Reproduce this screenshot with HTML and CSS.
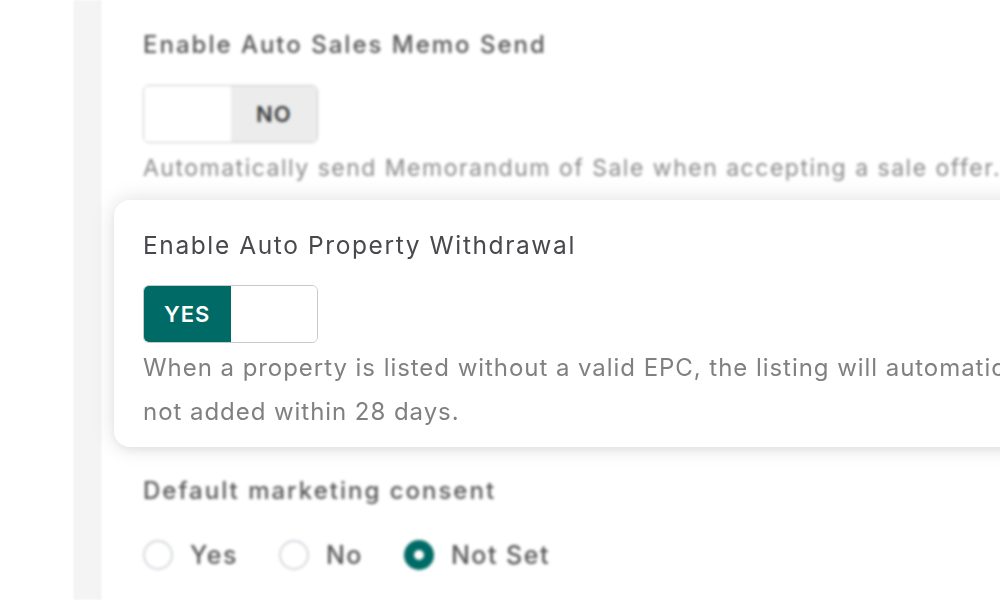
FILE: index.html
```html
<!DOCTYPE html>
<html>
<head>
<meta charset="utf-8">
<link rel="stylesheet" href="styles.css">
</head>
<body>
<div class="page">
  <div class="gutter"></div>
  <div class="rail"></div>
  <main class="content">
    <section class="field blurred first">
      <div class="label">Enable Auto Sales Memo Send</div>
      <div class="toggle">
        <span class="seg"></span>
        <span class="seg off">NO</span>
      </div>
      <div class="desc">Automatically send Memorandum of Sale when accepting a sale offer.</div>
    </section>

    <section class="card">
      <div class="label strong">Enable Auto Property Withdrawal</div>
      <div class="toggle">
        <span class="seg on">YES</span>
        <span class="seg"></span>
      </div>
      <div class="desc">When a property is listed without a valid EPC, the listing will automatically be withdrawn if one is<br>not added within 28 days.</div>
    </section>

    <section class="field blurred third">
      <div class="label">Default marketing consent</div>
      <div class="radios">
        <label class="radio"><span class="dot"></span>Yes</label>
        <label class="radio"><span class="dot"></span>No</label>
        <label class="radio"><span class="dot checked"></span>Not Set</label>
      </div>
    </section>
  </main>
</div>
</body>
</html>
```

FILE: styles.css
```css
html, body {
  margin: 0;
  padding: 0;
  background: #ffffff;
  overflow: hidden;
}
body {
  font-family: Inter, "Liberation Sans", sans-serif;
  width: 1000px;
  height: 600px;
}
.page {
  display: flex;
  height: 600px;
}
.gutter {
  width: 74px;
  flex: none;
  background: #ffffff;
}
.rail {
  width: 25px;
  flex: none;
  background: #f4f4f5;
  border-left: 1px solid #ececee;
  border-right: 1px solid #ececee;
  filter: blur(1px);
}
.content {
  flex: 1;
  padding-left: 42px;
  display: flex;
  flex-direction: column;
  min-width: 0;
}
.field {
  white-space: nowrap;
}
.blurred {
  filter: blur(1.4px);
}
.first {
  padding-top: 29px;
}
.label {
  font-size: 24.5px;
  line-height: 32px;
  color: #48484d;
  letter-spacing: 1.6px;
  white-space: nowrap;
}
.blurred .label {
  font-size: 24px;
  font-weight: 500;
  color: #555558;
  letter-spacing: 2px;
}
.toggle {
  margin-top: 24px;
  width: 173px;
  height: 56px;
  border: 1px solid #c9c9c9;
  border-radius: 6px;
  display: flex;
  overflow: hidden;
  box-sizing: content-box;
}
.seg {
  flex: 1;
  display: flex;
  align-items: center;
  justify-content: center;
  font-size: 22px;
  font-weight: 600;
  background: #ffffff;
  letter-spacing: 1px;
}
.seg.on {
  background: #006b66;
  color: #ffffff;
}
.seg.off {
  background: #ececec;
  color: #3a3a3a;
}
.desc {
  margin-top: 3px;
  font-size: 24px;
  line-height: 44px;
  color: #808080;
  letter-spacing: 0.95px;
  white-space: nowrap;
}
.blurred .desc {
  color: #8a8a8a;
  font-size: 23px;
  letter-spacing: 1.5px;
}
.card {
  margin-top: 10px;
  margin-left: -29px;
  width: 1400px;
  padding: 29px 29px 13px 29px;
  background: #ffffff;
  border-radius: 16px;
  box-shadow: 0 0 22px rgba(0, 0, 0, 0.13), 0 4px 10px rgba(0, 0, 0, 0.05);
  position: relative;
  z-index: 1;
}
.third {
  margin-top: 28px;
}
.radios {
  display: flex;
  align-items: center;
  margin-top: 33px;
  gap: 41px;
}
.radio {
  display: flex;
  align-items: center;
  gap: 17px;
  font-size: 25px;
  font-weight: 500;
  letter-spacing: 1.5px;
  color: #555558;
}
.dot {
  width: 26px;
  height: 26px;
  border: 2px solid #d4d7dc;
  border-radius: 50%;
  box-sizing: content-box;
  background: #ffffff;
}
.dot.checked {
  width: 10px;
  height: 10px;
  border: 10px solid #006b66;
}
```
